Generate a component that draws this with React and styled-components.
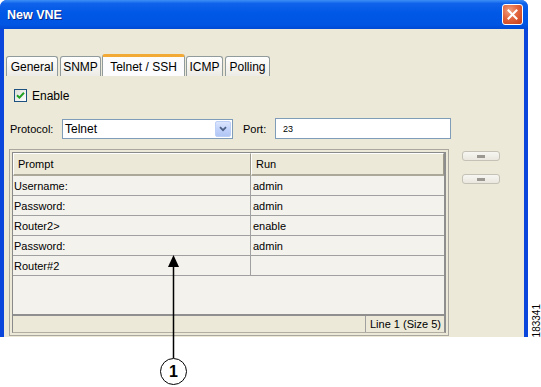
import React from "react";
import styled, { createGlobalStyle } from "styled-components";

const Global = createGlobalStyle`
  html, body { margin: 0; padding: 0; background: #ffffff; }
  body { font-family: "Liberation Sans", Arial, sans-serif; }
  * { box-sizing: border-box; }
`;

const Page = styled.div`
  position: relative;
  width: 541px;
  height: 387px;
  background: #fff;
  display: flex;
  flex-direction: column;
  overflow: hidden;
`;

const TopRow = styled.div`
  display: flex;
  align-items: flex-end;
`;

const Window = styled.div`
  width: 529px;
  height: 337px;
  background: #0b46dc;
  border-radius: 7px 7px 0 0;
  display: flex;
  flex-direction: column;
  overflow: hidden;
`;

const TitleBar = styled.div`
  height: 29px;
  flex: none;
  display: flex;
  align-items: center;
  justify-content: space-between;
  padding: 0 5px 0 7px;
  background: linear-gradient(
    to bottom,
    #3d8ff7 0%,
    #0f62ea 12%,
    #0058e6 45%,
    #0055e3 85%,
    #0049d4 100%
  );
`;

const Title = styled.span`
  color: #fff;
  font-weight: bold;
  font-size: 12.5px;
  text-shadow: 1px 1px 0 #0a2a8a;
  margin-top: 1px;
`;

const CloseButton = styled.div`
  width: 21px;
  height: 21px;
  border: 1px solid #fff;
  border-radius: 3px;
  background: radial-gradient(circle at 35% 30%, #f0a080 0%, #e2653e 45%, #c63c16 100%);
  display: flex;
  align-items: center;
  justify-content: center;
`;

const Body = styled.div`
  flex: 1;
  margin: 0 4px;
  background: #ece9d8;
  display: flex;
  flex-direction: column;
`;

const TabBar = styled.div`
  margin-top: 25px;
  padding-left: 2px;
  height: 22px;
  display: flex;
  align-items: flex-end;
  gap: 2px;
`;

const Tab = styled.div`
  width: ${(p) => p.$w}px;
  height: ${(p) => (p.$active ? 22 : 20)}px;
  margin: ${(p) => (p.$active ? "0 -1px" : "0")};
  border: 1px solid #919b9c;
  border-bottom: none;
  border-top: ${(p) => (p.$active ? "3px solid #f2a936" : "1px solid #919b9c")};
  border-radius: 3px 3px 0 0;
  background: ${(p) =>
    p.$active
      ? "#fcfcfe"
      : "linear-gradient(to bottom, #ffffff 0%, #f6f5f1 50%, #ecebe5 100%)"};
  font-size: 12px;
  color: #000;
  display: flex;
  align-items: center;
  justify-content: center;
  padding-top: ${(p) => (p.$active ? 0 : 1)}px;
  position: relative;
  z-index: ${(p) => (p.$active ? 1 : 0)};
`;

const EnableRow = styled.label`
  margin-top: 13px;
  padding-left: 10px;
  height: 13px;
  display: flex;
  align-items: center;
  gap: 5px;
  font-size: 12px;
  color: #000;
`;

const CheckBox = styled.span`
  width: 13px;
  height: 13px;
  border: 1px solid #1c5180;
  background: linear-gradient(135deg, #dcdcd7 0%, #ffffff 100%);
  display: flex;
  align-items: center;
  justify-content: center;
`;

const FormRow = styled.div`
  margin-top: 16px;
  padding-left: 6px;
  height: 21px;
  display: flex;
  align-items: center;
`;

const FieldLabel = styled.span`
  width: ${(p) => p.$w}px;
  flex: none;
  font-size: 11px;
  color: #000;
  margin-left: ${(p) => p.$ml || 0}px;
`;

const Combo = styled.div`
  width: 171px;
  height: 20px;
  border: 1px solid #7f9db9;
  background: #fff;
  display: flex;
  align-items: center;
  justify-content: space-between;
  padding: 1px 1px 1px 2px;
  font-size: 12px;
  color: #000;
`;

const ComboButton = styled.div`
  width: 16px;
  height: 16px;
  border: 1px solid #bccff7;
  border-radius: 2px;
  background: linear-gradient(to bottom, #dce6fd 0%, #c2d3fb 50%, #b1c6f5 100%);
  display: flex;
  align-items: center;
  justify-content: center;
`;

const TextField = styled.div`
  width: 176px;
  height: 21px;
  border: 1px solid #7f9db9;
  background: #fff;
  display: flex;
  align-items: center;
  padding-left: 7px;
  font-size: 9px;
  color: #000;
`;

const MainRow = styled.div`
  margin-top: 10px;
  padding-left: 5px;
  display: flex;
  align-items: flex-start;
`;

const TablePanel = styled.div`
  width: 440px;
  height: 187px;
  border: 1px solid #aaa89e;
  padding: 2px;
  display: flex;
`;

const TableBox = styled.div`
  flex: 1;
  border: 1px solid #8a8a8a;
  border-right: 2px solid #8e8e8e;
  border-bottom: 1px solid #b0ada2;
  background: #f4f2ec;
  display: flex;
  flex-direction: column;
`;

const GridRow = styled.div`
  display: grid;
  grid-template-columns: 238px 1fr;
  height: ${(p) => (p.$header ? 23 : 20)}px;
  flex: none;
`;

const HeadCell = styled.div`
  background: #ece9d8;
  border-top: 1px solid #fff;
  border-left: 1px solid #fff;
  border-right: 1px solid #9d9a8d;
  border-bottom: 2px solid #aca899;
  display: flex;
  align-items: center;
  padding-left: 4px;
  font-size: 11px;
  color: #000;
`;

const Cell = styled.div`
  border-bottom: 1px solid #a0a0a0;
  border-right: ${(p) => (p.$first ? "1px solid #a0a0a0" : "none")};
  display: flex;
  align-items: center;
  padding-left: ${(p) => (p.$first ? 1 : 2)}px;
  font-size: 11px;
  color: #000;
  white-space: nowrap;
`;

const Filler = styled.div`
  flex: 1;
`;

const StatusBar = styled.div`
  height: 18px;
  flex: none;
  border-top: 2px solid #8f8f8f;
  background: #ece9d8;
  display: flex;
  justify-content: flex-end;
`;

const StatusCell = styled.div`
  width: 79px;
  border-left: 1px solid #a0a0a0;
  display: flex;
  align-items: center;
  padding-left: 4px;
  font-size: 11px;
  color: #000;
`;

const SideButtons = styled.div`
  margin-left: 13px;
  padding-top: 2px;
  display: flex;
  flex-direction: column;
  gap: 13px;
`;

const SmallButton = styled.div`
  width: 38px;
  height: 10px;
  border: 1px solid #c4c1b6;
  border-radius: 3px;
  background: linear-gradient(to bottom, #f7f6f1 0%, #e9e7de 100%);
  display: flex;
  align-items: center;
  justify-content: center;
`;

const ButtonMark = styled.span`
  width: 8px;
  height: 3px;
  background: #9a9890;
`;

const SideLabel = styled.div`
  margin-left: 4px;
  writing-mode: vertical-rl;
  transform: rotate(180deg);
  font-size: 10px;
  line-height: 9px;
  color: #000;
`;

const CalloutArea = styled.div`
  flex: 1;
  padding: 21px 0 0 160px;
`;

const CalloutCircle = styled.div`
  width: 27px;
  height: 27px;
  border: 1.5px solid #000;
  border-radius: 50%;
  background: #fff;
  display: flex;
  align-items: center;
  justify-content: center;
  font-weight: bold;
  font-size: 16px;
  color: #000;
  position: relative;
  z-index: 2;
`;

const Overlay = styled.svg`
  position: absolute;
  left: 0;
  top: 0;
  pointer-events: none;
  z-index: 3;
`;

const rows = [
  ["Username:", "admin"],
  ["Password:", "admin"],
  ["Router2>", "enable"],
  ["Password:", "admin"],
  ["Router#2", ""],
];

const tabs = [
  { label: "General", w: 52 },
  { label: "SNMP", w: 41 },
  { label: "Telnet / SSH", w: 83, active: true },
  { label: "ICMP", w: 37 },
  { label: "Polling", w: 45 },
];

export default function App() {
  return (
    <>
      <Global />
      <Page>
        <TopRow>
          <Window>
            <TitleBar>
              <Title>New VNE</Title>
              <CloseButton>
                <svg width="11" height="11" viewBox="0 0 11 11">
                  <path d="M1.5 1.5 L9.5 9.5 M9.5 1.5 L1.5 9.5" stroke="#fff" strokeWidth="2" strokeLinecap="square" />
                </svg>
              </CloseButton>
            </TitleBar>
            <Body>
              <TabBar>
                {tabs.map((t) => (
                  <Tab key={t.label} $w={t.w} $active={t.active}>
                    {t.label}
                  </Tab>
                ))}
              </TabBar>
              <EnableRow>
                <CheckBox>
                  <svg width="9" height="9" viewBox="0 0 9 9">
                    <path d="M1 4.2 L3.4 6.6 L8 1.8" stroke="#21a121" strokeWidth="2" fill="none" />
                  </svg>
                </CheckBox>
                Enable
              </EnableRow>
              <FormRow>
                <FieldLabel $w={52}>Protocol:</FieldLabel>
                <Combo>
                  Telnet
                  <ComboButton>
                    <svg width="8" height="6" viewBox="0 0 8 6">
                      <path d="M1 1.2 L4 4.2 L7 1.2" stroke="#4d6185" strokeWidth="1.8" fill="none" />
                    </svg>
                  </ComboButton>
                </Combo>
                <FieldLabel $w={32} $ml={10}>Port:</FieldLabel>
                <TextField>23</TextField>
              </FormRow>
              <MainRow>
                <TablePanel>
                  <TableBox>
                    <GridRow $header>
                      <HeadCell>Prompt</HeadCell>
                      <HeadCell>Run</HeadCell>
                    </GridRow>
                    {rows.map((r, i) => (
                      <GridRow key={i}>
                        <Cell $first>{r[0]}</Cell>
                        <Cell>{r[1]}</Cell>
                      </GridRow>
                    ))}
                    <Filler />
                    <StatusBar>
                      <StatusCell>Line 1 (Size 5)</StatusCell>
                    </StatusBar>
                  </TableBox>
                </TablePanel>
                <SideButtons>
                  <SmallButton>
                    <ButtonMark />
                  </SmallButton>
                  <SmallButton>
                    <ButtonMark />
                  </SmallButton>
                </SideButtons>
              </MainRow>
            </Body>
          </Window>
          <SideLabel>183341</SideLabel>
        </TopRow>
        <CalloutArea>
          <CalloutCircle>1</CalloutCircle>
        </CalloutArea>
        <Overlay width="541" height="387" viewBox="0 0 541 387">
          <line x1="173.5" y1="264" x2="173.5" y2="358" stroke="#000" strokeWidth="1.5" />
          <polygon points="173.5,255 168,267 179,267" fill="#000" />
        </Overlay>
      </Page>
    </>
  );
}
